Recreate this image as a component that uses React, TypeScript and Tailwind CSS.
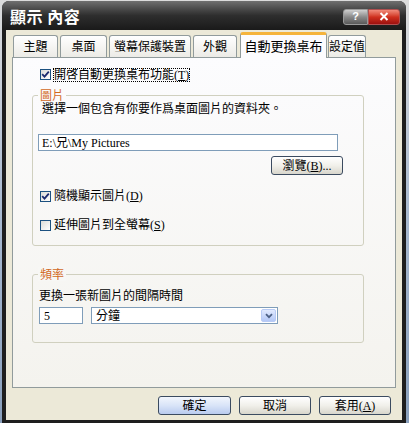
import React from 'react';

const txt = "font-['Liberation_Serif','Noto_Sans_CJK_TC',serif] text-[12px] text-black";

const Check = ({ checked }: { checked?: boolean }) => (
  <span className="w-[11px] h-[11px] shrink-0 border border-[#1C5180] bg-linear-to-br from-[#DCDCD7] to-white flex items-center justify-center">
    {checked && (
      <svg width="9" height="9" viewBox="0 0 9 9">
        <path d="M1.2 4.2 L3.5 6.6 L7.8 1.6" stroke="#1b2a6e" strokeWidth="1.8" fill="none" />
      </svg>
    )}
  </span>
);

const Button = ({ children, primary }: { children: React.ReactNode; primary?: boolean }) => (
  <button
    className={
      primary
        ? 'w-[73px] h-[19px] rounded-[3px] border border-[#3b4b60] bg-linear-to-b from-[#f2f6fd] via-[#d9e4f8] to-[#b9cbef] flex items-center justify-center leading-[14px] ' + txt
        : 'w-[72px] h-[19px] rounded-[3px] border border-[#3b4b60] bg-linear-to-b from-white via-[#f1f0ea] to-[#d8d6cc] flex items-center justify-center leading-[14px] ' + txt
    }
  >
    {children}
  </button>
);

const tabs = [
  { label: '主題', cls: 'ml-[1px] w-[45px]' },
  { label: '桌面', cls: 'ml-[2px] w-[47px]' },
  { label: '螢幕保護裝置', cls: 'ml-[2px] w-[82px]' },
  { label: '外觀', cls: 'ml-[2px] w-[44px]' },
];

export default function App() {
  return (
    <div className="w-[409px] h-[423px] bg-linear-to-b from-[#dcdcdc] via-[#a9bad0] to-[#8aa0bd] flex overflow-hidden">
      <div className="ml-[2px] mt-px w-[404px] h-[422px] rounded-t-[7px] bg-[#1e1e1e] flex flex-col">
        {/* title bar */}
        <div className="h-[29px] shrink-0 rounded-t-[7px] bg-linear-to-b from-[#707070] via-[#2e2e2e] to-[#1a1a1a] flex items-center justify-between pl-[8px] pr-[6px]">
          <span className="font-['Noto_Sans_CJK_TC',sans-serif] font-bold text-[16px] leading-[18px] text-white tracking-[0.5px]">
            顯示 內容
          </span>
          <div className="flex items-center mt-[2px]">
            <div className="w-[25px] h-[16px] rounded-l-[3px] border border-[#9a9a9a] bg-linear-to-b from-[#d0d0d0] via-[#8a8a8a] to-[#5a5a5a] flex items-center justify-center text-white text-[11px] font-bold font-['Liberation_Sans',sans-serif] leading-none">
              ?
            </div>
            <div className="w-[32px] h-[16px] rounded-r-[3px] border border-[#b05050] bg-linear-to-b from-[#f08a7a] via-[#d0301e] to-[#9c0f0f] flex items-center justify-center">
              <svg width="10" height="9" viewBox="0 0 10 9">
                <path d="M1.5 1 L8.5 8 M8.5 1 L1.5 8" stroke="white" strokeWidth="2" />
              </svg>
            </div>
          </div>
        </div>

        {/* body */}
        <div className="flex-1 mx-[4px] mb-[3px] bg-[#ECE9D8] px-[6px] pt-[2px] pb-[5px] flex flex-col">
          {/* tabs */}
          <div className="h-[26px] shrink-0 flex items-end mb-[-1px] relative z-10">
            {tabs.map((t) => (
              <div
                key={t.label}
                className={
                  t.cls +
                  ' h-[22px] mb-px rounded-t-[3px] border border-b-0 border-[#919B9C] bg-linear-to-b from-white to-[#ecebe6] flex items-center justify-center leading-[14px] ' +
                  txt
                }
              >
                {t.label}
              </div>
            ))}
            <div className={'ml-[3px] w-[87px] h-[26px] rounded-t-[3px] border-x border-[#919B9C] border-t-[3px] border-t-[#f5b43c] bg-[#FCFCFE] flex items-center justify-center leading-[14px] ' + txt}>
              <span className="text-[13px]">自動更換桌布</span>
            </div>
            <div className={'ml-px w-[38px] h-[22px] mb-px rounded-t-[3px] border border-b-0 border-[#919B9C] bg-linear-to-b from-white to-[#ecebe6] flex items-center justify-center leading-[14px] ' + txt}>
              設定值
            </div>
          </div>

          {/* panel */}
          <div className="h-[331px] shrink-0 border border-[#919B9C] bg-linear-to-b from-[#FCFCFE] to-[#F4F3EE] pl-[19px] pr-[31px] pt-[10px] flex flex-col">
            <div className="ml-[8px] h-[13px] shrink-0 flex items-center gap-[3px]">
              <Check checked />
              <span className={'leading-[12px] outline-1 outline-dotted outline-black ' + txt}>
                開啓自動更換桌布功能(<u>T</u>)
              </span>
            </div>

            {/* 圖片 group */}
            <div className="mt-[14px] h-[151px] shrink-0 border border-[#D0D0BF] rounded-[3px] flex flex-col">
              <div className="-mt-[8px] ml-[5px] px-[2px] w-fit bg-[#FBFBFB] leading-[14px] text-[12px] text-[#d2691e] font-['Noto_Sans_CJK_TC',sans-serif]">
                圖片
              </div>
              <div className={'ml-[9px] leading-[14px] ' + txt}>選擇一個包含有你要作爲桌面圖片的資料夾。</div>
              <div className={'mt-[18px] ml-[5px] w-[300px] h-[17px] border border-[#7F9DB9] bg-white pl-[3px] flex items-center leading-[14px] ' + txt}>
                E:\兄\My Pictures
              </div>
              <div className="mt-[5px] mr-[20px] flex justify-end">
                <Button>
                  瀏覽(<u>B</u>)...
                </Button>
              </div>
              <div className="mt-[15px] ml-[7px] h-[12px] flex items-center gap-[3px]">
                <Check checked />
                <span className={'leading-[12px] ' + txt}>
                  隨機顯示圖片(<u>D</u>)
                </span>
              </div>
              <div className="mt-[17px] ml-[7px] h-[12px] flex items-center gap-[3px]">
                <Check />
                <span className={'leading-[12px] ' + txt}>
                  延伸圖片到全螢幕(<u>S</u>)
                </span>
              </div>
            </div>

            {/* 頻率 group */}
            <div className="mt-[28px] h-[69px] shrink-0 border border-[#D0D0BF] rounded-[3px] flex flex-col">
              <div className="-mt-[8px] ml-[5px] px-[2px] w-fit bg-[#F7F7F5] leading-[14px] text-[12px] text-[#d2691e] font-['Noto_Sans_CJK_TC',sans-serif]">
                頻率
              </div>
              <div className={'mt-[8px] ml-[6px] leading-[14px] ' + txt}>更換一張新圖片的間隔時間</div>
              <div className="mt-[4px] ml-[6px] flex gap-[8px]">
                <div className={'w-[44px] h-[17px] border border-[#7F9DB9] bg-white pl-[4px] flex items-center leading-[14px] ' + txt}>
                  5
                </div>
                <div className={'w-[187px] h-[17px] border border-[#7F9DB9] bg-white pl-[4px] pr-px flex items-center justify-between leading-[14px] ' + txt}>
                  <span>分鐘</span>
                  <span className="w-[15px] h-[13px] rounded-[2px] border border-[#b8cbf5] bg-linear-to-b from-[#e1eafe] to-[#b4c8f6] flex items-center justify-center">
                    <svg width="8" height="6" viewBox="0 0 8 6">
                      <path d="M1 1.2 L4 4.2 L7 1.2" stroke="#4d6185" strokeWidth="1.8" fill="none" />
                    </svg>
                  </span>
                </div>
              </div>
            </div>
          </div>

          {/* buttons */}
          <div className="mt-[8px] pr-[5px] flex justify-end gap-[8px]">
            <Button primary>確定</Button>
            <Button>取消</Button>
            <Button>
              套用(<u>A</u>)
            </Button>
          </div>
        </div>
      </div>
    </div>
  );
}
